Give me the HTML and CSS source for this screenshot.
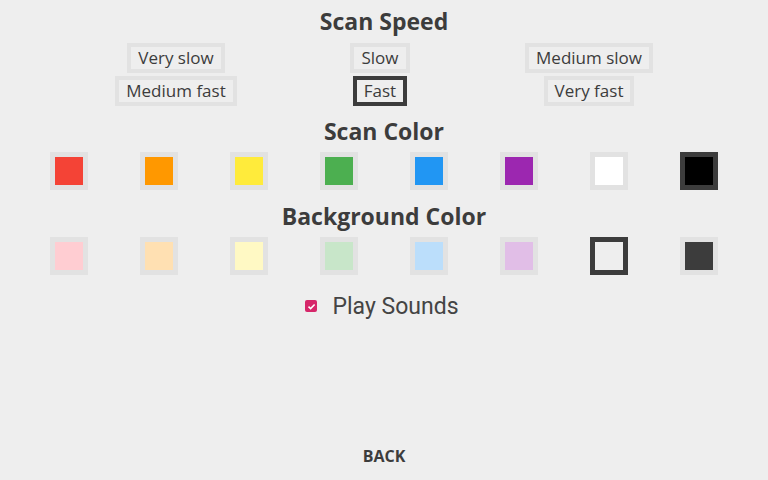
FILE: index.html
```html
<!DOCTYPE html>
<html>
<head>
<meta charset="utf-8">
<link rel="stylesheet" href="styles.css">
</head>
<body>
<div class="page">
  <h2 class="heading h-speed">Scan Speed</h2>
  <div class="speed-grid">
    <div class="cell"><span class="opt">Very slow</span></div>
    <div class="cell"><span class="opt">Slow</span></div>
    <div class="cell"><span class="opt">Medium slow</span></div>
    <div class="cell"><span class="opt">Medium fast</span></div>
    <div class="cell"><span class="opt selected">Fast</span></div>
    <div class="cell"><span class="opt">Very fast</span></div>
  </div>

  <h2 class="heading h-color">Scan Color</h2>
  <div class="swatches">
    <div class="cell"><span class="sw"><span class="fill red"></span></span></div>
    <div class="cell"><span class="sw"><span class="fill orange"></span></span></div>
    <div class="cell"><span class="sw"><span class="fill yellow"></span></span></div>
    <div class="cell"><span class="sw"><span class="fill green"></span></span></div>
    <div class="cell"><span class="sw"><span class="fill blue"></span></span></div>
    <div class="cell"><span class="sw"><span class="fill purple"></span></span></div>
    <div class="cell"><span class="sw"><span class="fill white"></span></span></div>
    <div class="cell"><span class="sw selected"><span class="fill black"></span></span></div>
  </div>

  <h2 class="heading h-bg">Background Color</h2>
  <div class="swatches">
    <div class="cell"><span class="sw"><span class="fill l-red"></span></span></div>
    <div class="cell"><span class="sw"><span class="fill l-orange"></span></span></div>
    <div class="cell"><span class="sw"><span class="fill l-yellow"></span></span></div>
    <div class="cell"><span class="sw"><span class="fill l-green"></span></span></div>
    <div class="cell"><span class="sw"><span class="fill l-blue"></span></span></div>
    <div class="cell"><span class="sw"><span class="fill l-purple"></span></span></div>
    <div class="cell"><span class="sw selected"><span class="fill l-grey"></span></span></div>
    <div class="cell"><span class="sw"><span class="fill l-dark"></span></span></div>
  </div>

  <label class="check-row">
    <span class="checkbox">
      <svg width="9" height="9" viewBox="0 0 9 9"><path d="M1.5 4.6 L3.6 6.6 L7.6 2.4" fill="none" stroke="#fff" stroke-width="1.5"/></svg>
    </span>
    <span class="check-label">Play Sounds</span>
  </label>

  <div class="back">BACK</div>
</div>
</body>
</html>
```

FILE: styles.css
```css
html, body {
  margin: 0;
  padding: 0;
  background: #eeeeee;
}

.page {
  height: 480px;
  box-sizing: border-box;
  display: flex;
  flex-direction: column;
  align-items: center;
  padding: 6px 0 12px;
  font-family: "Open Sans", sans-serif;
  color: #3c3c3c;
}

.heading {
  margin: 0;
  font-size: 23px;
  line-height: 30px;
  font-weight: 700;
  color: #3c3c3c;
}

.h-color { margin-top: 10px; }
.h-bg { margin-top: 11px; }

.speed-grid {
  margin-top: 7px;
  display: grid;
  grid-template-columns: 208px 200px 218px;
  row-gap: 3px;
  align-self: flex-start;
  margin-left: 72px;
}

.speed-grid .cell {
  display: flex;
  justify-content: center;
}

.opt {
  display: inline-block;
  border: 4px solid #e2e2e2;
  padding: 0 7px;
  font-size: 17px;
  line-height: 22px;
  color: #3c3c3c;
  background: #eeeeee;
}

.opt.selected {
  border-color: #3c3c3c;
}

.swatches {
  margin-top: 6px;
  display: grid;
  grid-template-columns: repeat(8, 90px);
}

.swatches .cell {
  display: flex;
  justify-content: center;
}

.sw {
  display: block;
  width: 38px;
  height: 38px;
  box-sizing: border-box;
  border: 5px solid #e2e2e2;
}

.sw.selected {
  border-color: #3c3c3c;
}

.fill {
  display: block;
  width: 100%;
  height: 100%;
}

.red { background: #f44336; }
.orange { background: #ff9800; }
.yellow { background: #ffeb3b; }
.green { background: #4caf50; }
.blue { background: #2196f3; }
.purple { background: #9c27b0; }
.white { background: #ffffff; }
.black { background: #000000; }

.l-red { background: #ffcdd2; }
.l-orange { background: #ffe0b2; }
.l-yellow { background: #fff9c4; }
.l-green { background: #c8e6c9; }
.l-blue { background: #bbdefb; }
.l-purple { background: #e1bee7; }
.l-grey { background: #eeeeee; }
.l-dark { background: #3c3c3c; }

.check-row {
  margin-top: 17px;
  display: flex;
  align-items: center;
  gap: 15px;
  height: 30px;
  margin-left: -4px;
}

.checkbox {
  width: 12px;
  height: 12px;
  border-radius: 2px;
  background: #d6276a;
  display: flex;
  align-items: center;
  justify-content: center;
  margin-top: -2px;
}

.check-label {
  font-family: Roboto, sans-serif;
  font-size: 23px;
  line-height: 30px;
  color: #444444;
}

.back {
  margin-top: auto;
  font-size: 16px;
  line-height: 24px;
  font-weight: 700;
  color: #3c3c3c;
}
```
